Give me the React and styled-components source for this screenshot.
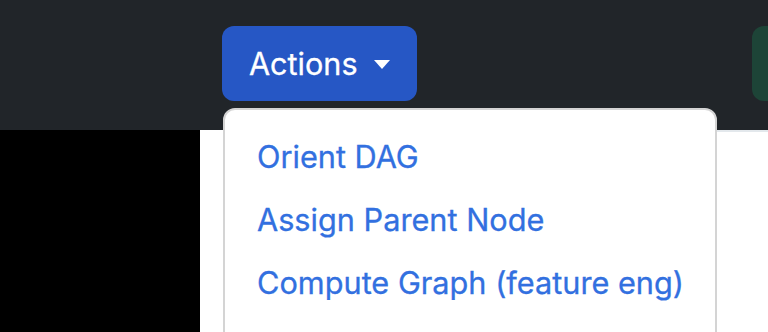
import React from 'react'
import styled, { createGlobalStyle } from 'styled-components'

const Global = createGlobalStyle`
  html, body {
    margin: 0;
    padding: 0;
    background: #fff;
    overflow: hidden;
  }
  body {
    font-family: Inter, "Liberation Sans", sans-serif;
  }
`

const Page = styled.div`
  width: 768px;
  height: 332px;
  display: flex;
  flex-direction: column;
  overflow: hidden;
`

const Navbar = styled.nav`
  height: 130px;
  flex-shrink: 0;
  background: #212529;
  display: flex;
  align-items: flex-start;
  padding: 26px 0 0 222px;
  box-sizing: border-box;
  position: relative;
  z-index: 2;
`

const Dropdown = styled.div`
  position: relative;
`

const Toggle = styled.button`
  height: 75px;
  width: 195px;
  box-sizing: border-box;
  display: flex;
  align-items: center;
  gap: 16px;
  padding: 0 28px 0 27px;
  border: none;
  border-radius: 12px;
  background: #2657c5;
  color: #fff;
  font-family: inherit;
  font-size: 30.6px;
  font-weight: 400;
  -webkit-text-stroke: 0.3px #fff;
  cursor: pointer;
`

const Caret = styled.span`
  width: 0;
  height: 0;
  border-left: 8px solid transparent;
  border-right: 8px solid transparent;
  border-top: 9px solid #fff;
  margin-top: 2px;
`

const Menu = styled.ul`
  position: absolute;
  top: 82px;
  left: 1px;
  width: 494px;
  height: 300px;
  box-sizing: border-box;
  margin: 0;
  padding: 15px 0 0;
  list-style: none;
  background: #fff;
  border: 2px solid #d4d4d4;
  border-radius: 12px;
`

const Item = styled.li`
  padding: 9px 32px;
  font-size: 30.7px;
  line-height: 45px;
  color: #3270e0;
  -webkit-text-stroke: 0.3px #3270e0;
  white-space: nowrap;
`

const Green = styled.div`
  position: absolute;
  top: 26px;
  left: 752px;
  width: 60px;
  height: 75px;
  border-radius: 12px;
  background: #1d4437;
`

const Body = styled.div`
  flex: 1;
  display: grid;
  grid-template-columns: 200px 1fr;
`

const Sidebar = styled.aside`
  background: #000;
`

const Content = styled.main`
  background: #fff;
  display: flex;
  flex-direction: column;
`

const TabLine = styled.div`
  margin-left: 200px;
  border-top: 2px solid #e3e8ec;
`

const items = ['Orient DAG', 'Assign Parent Node', 'Compute Graph (feature eng)']

export default function App() {
  return (
    <Page>
      <Global />
      <Navbar>
        <Dropdown>
          <Toggle>
            Actions
            <Caret />
          </Toggle>
          <Menu>
            {items.map((t) => (
              <Item key={t}>{t}</Item>
            ))}
          </Menu>
        </Dropdown>
        <Green />
      </Navbar>
      <Body>
        <Sidebar />
        <Content>
          <TabLine />
        </Content>
      </Body>
    </Page>
  )
}
